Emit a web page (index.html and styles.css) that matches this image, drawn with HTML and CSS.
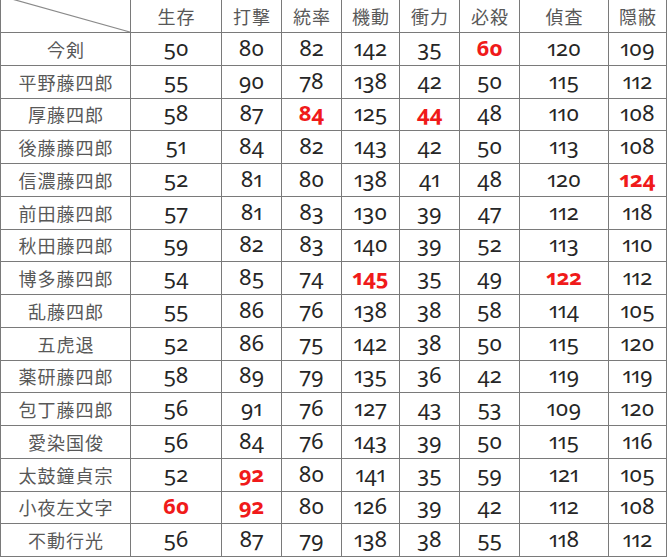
FILE: index.html
```html
<!DOCTYPE html>
<html lang="ja">
<head>
<meta charset="utf-8">
<title>刀剣ステータス</title>
<link rel="stylesheet" href="styles.css">
</head>
<body>
<div class="stats">
  <div class="cell corner"><svg class="diag" viewBox="0 0 129 32" preserveAspectRatio="none"><line x1="0" y1="-4" x2="129" y2="32"/></svg></div>
  <div class="cell head">生存</div><div class="cell head">打撃</div><div class="cell head">統率</div><div class="cell head">機動</div><div class="cell head">衝力</div><div class="cell head">必殺</div><div class="cell head">偵査</div><div class="cell head">隠蔽</div>

  <div class="cell name">今剣</div><div class="cell num">50</div><div class="cell num">80</div><div class="cell num">82</div><div class="cell num">142</div><div class="cell num">35</div><div class="cell num max">60</div><div class="cell num">120</div><div class="cell num">109</div>
  <div class="cell name">平野藤四郎</div><div class="cell num">55</div><div class="cell num">90</div><div class="cell num">78</div><div class="cell num">138</div><div class="cell num">42</div><div class="cell num">50</div><div class="cell num">115</div><div class="cell num">112</div>
  <div class="cell name">厚藤四郎</div><div class="cell num">58</div><div class="cell num">87</div><div class="cell num max">84</div><div class="cell num">125</div><div class="cell num max">44</div><div class="cell num">48</div><div class="cell num">110</div><div class="cell num">108</div>
  <div class="cell name">後藤藤四郎</div><div class="cell num">51</div><div class="cell num">84</div><div class="cell num">82</div><div class="cell num">143</div><div class="cell num">42</div><div class="cell num">50</div><div class="cell num">113</div><div class="cell num">108</div>
  <div class="cell name">信濃藤四郎</div><div class="cell num">52</div><div class="cell num">81</div><div class="cell num">80</div><div class="cell num">138</div><div class="cell num">41</div><div class="cell num">48</div><div class="cell num">120</div><div class="cell num max">124</div>
  <div class="cell name">前田藤四郎</div><div class="cell num">57</div><div class="cell num">81</div><div class="cell num">83</div><div class="cell num">130</div><div class="cell num">39</div><div class="cell num">47</div><div class="cell num">112</div><div class="cell num">118</div>
  <div class="cell name">秋田藤四郎</div><div class="cell num">59</div><div class="cell num">82</div><div class="cell num">83</div><div class="cell num">140</div><div class="cell num">39</div><div class="cell num">52</div><div class="cell num">113</div><div class="cell num">110</div>
  <div class="cell name">博多藤四郎</div><div class="cell num">54</div><div class="cell num">85</div><div class="cell num">74</div><div class="cell num max">145</div><div class="cell num">35</div><div class="cell num">49</div><div class="cell num max">122</div><div class="cell num">112</div>
  <div class="cell name">乱藤四郎</div><div class="cell num">55</div><div class="cell num">86</div><div class="cell num">76</div><div class="cell num">138</div><div class="cell num">38</div><div class="cell num">58</div><div class="cell num">114</div><div class="cell num">105</div>
  <div class="cell name">五虎退</div><div class="cell num">52</div><div class="cell num">86</div><div class="cell num">75</div><div class="cell num">142</div><div class="cell num">38</div><div class="cell num">50</div><div class="cell num">115</div><div class="cell num">120</div>
  <div class="cell name">薬研藤四郎</div><div class="cell num">58</div><div class="cell num">89</div><div class="cell num">79</div><div class="cell num">135</div><div class="cell num">36</div><div class="cell num">42</div><div class="cell num">119</div><div class="cell num">119</div>
  <div class="cell name">包丁藤四郎</div><div class="cell num">56</div><div class="cell num">91</div><div class="cell num">76</div><div class="cell num">127</div><div class="cell num">43</div><div class="cell num">53</div><div class="cell num">109</div><div class="cell num">120</div>
  <div class="cell name">愛染国俊</div><div class="cell num">56</div><div class="cell num">84</div><div class="cell num">76</div><div class="cell num">143</div><div class="cell num">39</div><div class="cell num">50</div><div class="cell num">115</div><div class="cell num">116</div>
  <div class="cell name">太鼓鐘貞宗</div><div class="cell num">52</div><div class="cell num max">92</div><div class="cell num">80</div><div class="cell num">141</div><div class="cell num">35</div><div class="cell num">59</div><div class="cell num">121</div><div class="cell num">105</div>
  <div class="cell name">小夜左文字</div><div class="cell num max">60</div><div class="cell num max">92</div><div class="cell num">80</div><div class="cell num">126</div><div class="cell num">39</div><div class="cell num">42</div><div class="cell num">112</div><div class="cell num">108</div>
  <div class="cell name">不動行光</div><div class="cell num">56</div><div class="cell num">87</div><div class="cell num">79</div><div class="cell num">138</div><div class="cell num">38</div><div class="cell num">55</div><div class="cell num">118</div><div class="cell num">112</div>
</div>
</body>
</html>
```

FILE: styles.css
```css
html, body {
  margin: 0;
  padding: 0;
  background: #ffffff;
}

.stats {
  width: 667px;
  height: 557px;
  box-sizing: border-box;
  display: grid;
  grid-template-columns: 129px 90px 59px 59px 57px 59px 59px 88px 57px;
  grid-template-rows: 32px repeat(16, 1fr);
  gap: 1px;
  padding: 0 1px 1px 1px;
  background: #7a7a7a;
  overflow: hidden;
}

.cell {
  background: #ffffff;
  display: flex;
  align-items: center;
  justify-content: center;
  overflow: hidden;
  white-space: nowrap;
}

.corner {
  position: relative;
}

.diag {
  position: absolute;
  inset: 0;
  width: 100%;
  height: 100%;
  overflow: visible;
}

.diag line {
  stroke: #8a8a8a;
  stroke-width: 1.2;
  vector-effect: non-scaling-stroke;
}

.head,
.name {
  font-family: "Noto Sans CJK JP", sans-serif;
  font-size: 18px;
  letter-spacing: 1px;
  color: #585858;
  padding-left: 1px;
}

.num {
  font-family: "Noto Sans", sans-serif;
  font-variant-numeric: oldstyle-nums proportional-nums;
  font-size: 22px;
  color: #262626;
  padding-bottom: 4px;
}

.max {
  color: #f01a1a;
  font-weight: 700;
}
```
